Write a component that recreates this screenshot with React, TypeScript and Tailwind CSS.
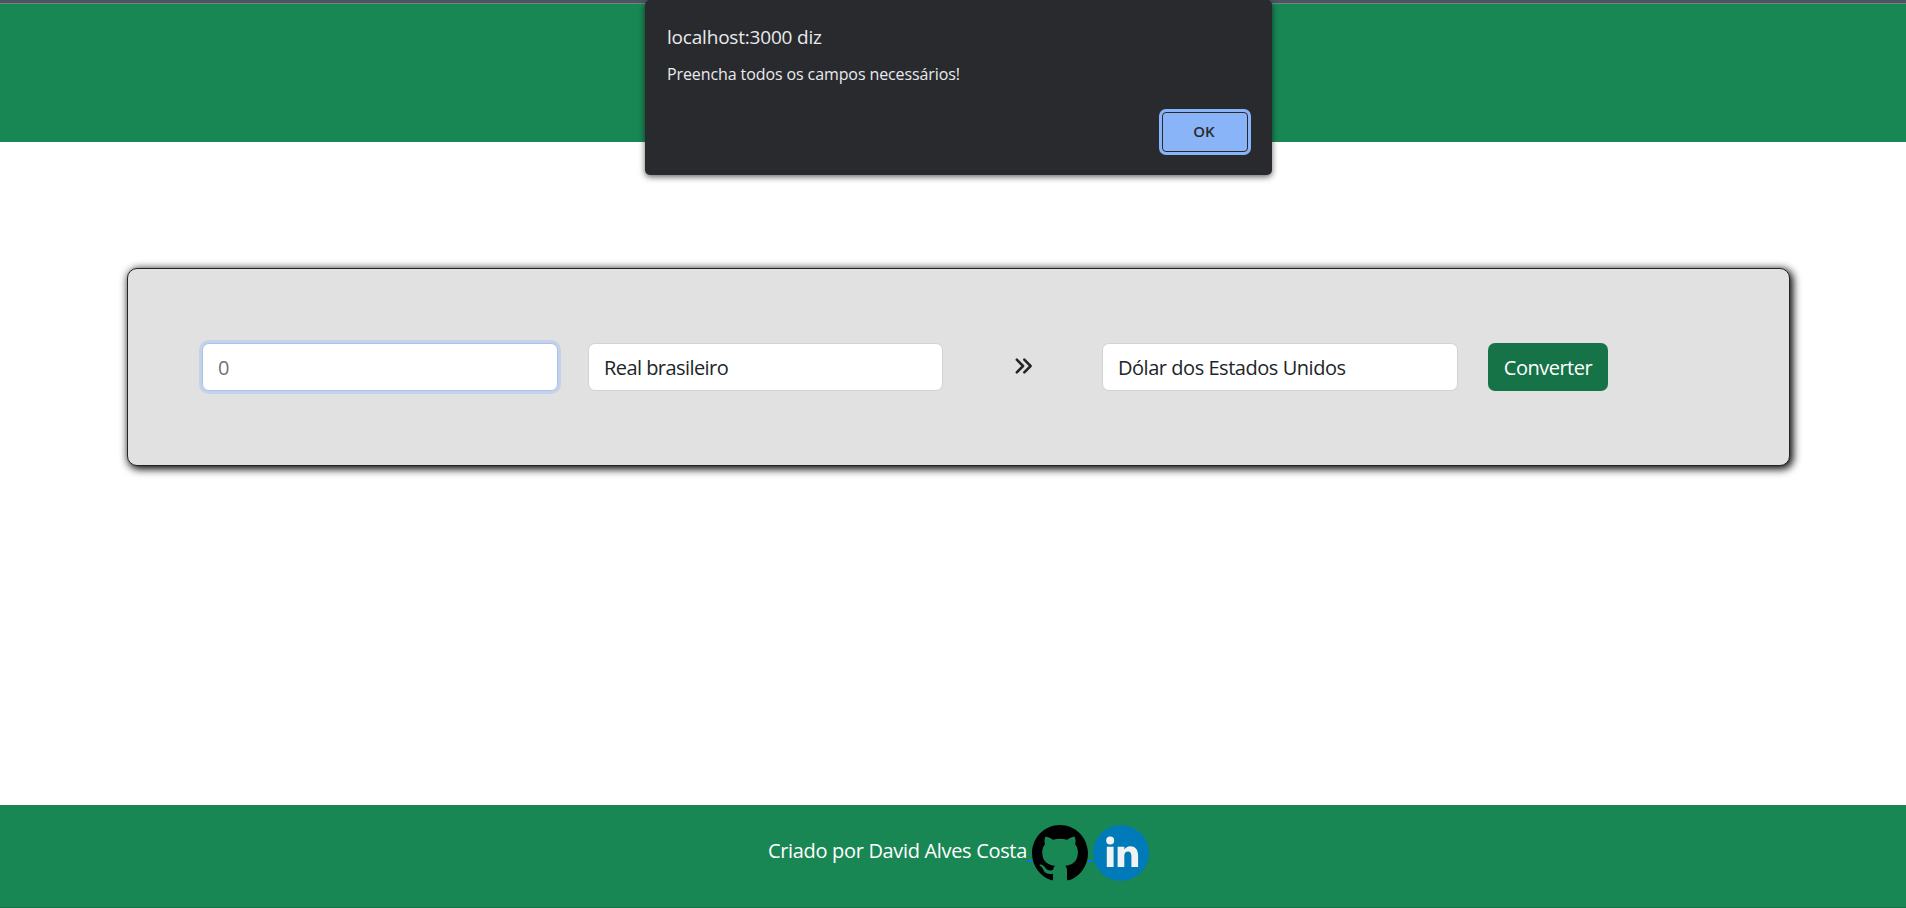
import React from "react";

function ChevronsIcon() {
  return (
    <svg width="20" height="20" viewBox="0 0 20 20" fill="none" stroke="#212529" strokeWidth="2.5" strokeLinecap="round" strokeLinejoin="round" aria-hidden="true">
      <path d="M2.800 3.700l6.300 6.300-6.300 6.300M10.300 3.700l6.300 6.300-6.300 6.300" />
    </svg>
  );
}

function GithubIcon() {
  return (
    <svg className="block size-14" viewBox="0 0 16 15.8" preserveAspectRatio="none" fill="#000" aria-hidden="true">
      <path d="M8 0C3.58 0 0 3.58 0 8c0 3.54 2.29 6.53 5.47 7.59.4.07.55-.17.55-.38 0-.19-.01-.82-.01-1.49-2.01.37-2.53-.49-2.69-.94-.09-.23-.48-.94-.82-1.13-.28-.15-.68-.52-.01-.53.63-.01 1.08.58 1.23.82.72 1.21 1.87.87 2.33.66.07-.52.28-.87.51-1.07-1.78-.2-3.64-.89-3.64-3.95 0-.87.31-1.59.82-2.15-.08-.2-.36-1.02.08-2.12 0 0 .67-.21 2.2.82.64-.18 1.32-.27 2-.27s1.36.09 2 .27c1.53-1.04 2.2-.82 2.2-.82.44 1.1.16 1.92.08 2.12.51.56.82 1.27.82 2.15 0 3.07-1.87 3.75-3.65 3.95.29.25.54.73.54 1.48 0 1.07-.01 1.93-.01 2.2 0 .21.15.46.55.38A8.01 8.01 0 0 0 16 8c0-4.42-3.58-8-8-8z" />
    </svg>
  );
}

function LinkedinIcon() {
  return (
    <svg className="block size-14" viewBox="0 0 56 56" aria-hidden="true">
      <circle cx="28" cy="28" r="28" fill="#007ab9" />
      <g fill="#f1f2f2">
        <circle cx="17.2" cy="15.5" r="4" />
        <path d="M13.8 21.7h6.8V42h-6.8zM24.6 21.7h6.7v2.9c.9-1.4 2.5-3.4 6.1-3.4 4.4 0 7.7 2.9 7.7 9.1V42h-6.7V31.200c0-2.700-1-4.600-3.400-4.600-1.900 0-3 1.200-3.400 2.400-.2.400-.3 1-.3 1.700V42h-6.700z" />
      </g>
    </svg>
  );
}

export default function App() {
  return (
    <div className="relative flex h-[908px] w-full flex-col overflow-hidden bg-white font-['Open_Sans','Noto_Sans',sans-serif] text-[20px] text-[#212529]">
      <div className="h-1 shrink-0 border-b border-[#7d8084] bg-[#485662]" />
      <header className="h-[138px] shrink-0 bg-[#198754]" />

      <main className="flex grow flex-col px-[127px] pt-[126px]">
        <form className="flex h-[198px] w-[1663px] items-center rounded-[10px] border border-[#212529] bg-[#e1e1e1] pl-[74px] shadow-[2px_2px_8px_1px_#000]">
          <input
            placeholder="0"
            className="h-12 w-[356px] rounded-[7px] border border-[#a6c4f0] bg-white px-[15px] pt-px text-[20px] shadow-[0_0_0_3px_#c5d1e6] outline-none placeholder:text-[#6c757d]"
          />
          <div className="ml-[30px] flex h-12 w-[355px] items-center rounded-[7px] border border-[#ced4da] bg-white px-[15px] pt-0.5">
            <span className="tracking-[-0.56px]">Real brasileiro</span>
          </div>
          <div className="flex w-[159px] justify-center pb-0.5 pl-[3px]">
            <ChevronsIcon />
          </div>
          <div className="flex h-12 w-[356px] items-center rounded-[7px] border border-[#ced4da] bg-white px-[15px] pt-0.5">
            <span className="tracking-[-0.46px]">Dólar dos Estados Unidos</span>
          </div>
          <button type="button" className="ml-[30px] h-12 w-[120px] rounded-[7px] bg-[#157347] pt-0.5 tracking-[-0.5px] text-white">
            Converter
          </button>
        </form>
      </main>

      <footer className="flex h-[103px] shrink-0 items-start border-b border-[#157347] bg-[#198754] pt-5 pl-[768px] text-white">
        <span className="w-[259px] pt-[11px] tracking-[-0.33px] whitespace-nowrap">Criado por David Alves Costa</span>
        <span className="mt-[35px] h-[2px] w-[5px] bg-[#0d6efd]" />
        <GithubIcon />
        <span className="mt-[35px] h-[2px] w-[5px] bg-[#0d6efd]" />
        <LinkedinIcon />
      </footer>

      <div role="alertdialog" className="absolute top-0 left-[645px] flex h-[175px] w-[627px] flex-col rounded-[5px] bg-[#292a2d] px-[22px] text-[#e8eaed] shadow-[0_2px_6px_rgba(0,0,0,0.6)]">
        <p className="mt-[23px] h-7 text-[19px] leading-7 tracking-[-0.2px]">localhost:3000 diz</p>
        <p className="mt-[11px] h-6 text-[16px] leading-6 tracking-[-0.1px]">Preencha todos os campos necessários!</p>
        <button type="button" className="mt-[26px] mr-[2px] flex h-10 w-[86px] items-center justify-center self-end rounded-[4px] border border-[#292a2d] bg-[#8ab4f8] pr-0.5 pb-0.5 text-[15px] font-semibold text-[#292a2d] shadow-[0_0_0_3px_#8ab4f8]">
          OK
        </button>
      </div>
    </div>
  );
}
